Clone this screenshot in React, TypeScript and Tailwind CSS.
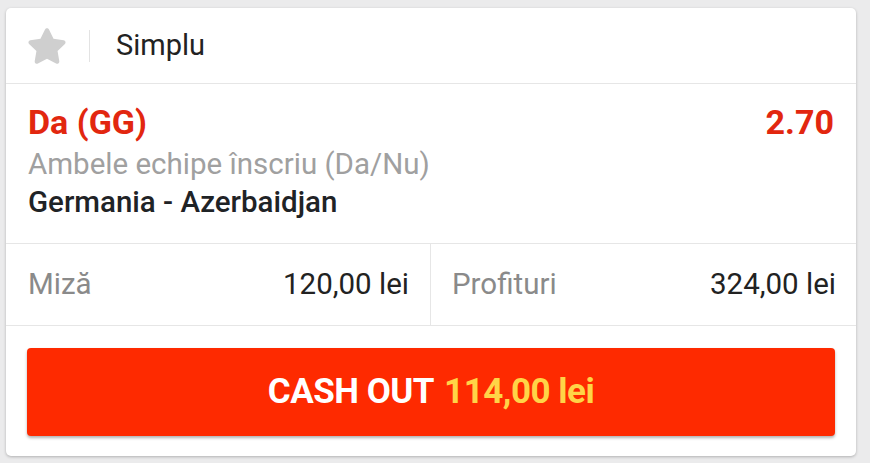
import { FaStar } from "react-icons/fa";

const App = () => {
  return (
    <div className="w-[870px] h-[463px] bg-[#ebebec] pt-[8px] pl-[6px] pr-[14px] font-['Roboto',sans-serif]">
      <div className="w-[850px] h-[448px] bg-white rounded-[5px] shadow-[0_1px_3px_rgba(0,0,0,0.25)] flex flex-col">
        <div className="h-[76px] flex items-center border-b border-[#e6e6e6] px-[21px]">
          <FaStar className="text-[#cfcfcf] text-[40px]" />
          <div className="w-px h-[32px] bg-[#e3e3e3] ml-[22px] mr-[26px]" />
          <span className="text-[29px] text-[#222]">Simplu</span>
        </div>

        <div className="h-[160px] border-b border-[#e6e6e6] px-[22px] pt-[18px]">
          <div className="flex justify-between items-baseline">
            <span className="text-[34px] font-bold text-[#e2270f] leading-[40px]">Da (GG)</span>
            <span className="text-[34px] font-bold text-[#e2270f] leading-[40px]">2.70</span>
          </div>
          <div className="text-[29.5px] text-[#a0a0a0] leading-[44px]">Ambele echipe înscriu (Da/Nu)</div>
          <div className="text-[29.5px] font-medium text-[#1f2326] leading-[32px]">Germania - Azerbaidjan</div>
        </div>

        <div className="h-[82px] border-b border-[#e6e6e6] grid grid-cols-2">
          <div className="flex items-center justify-between pl-[22px] pr-[21px] border-r border-[#e6e6e6]">
            <span className="text-[29.5px] text-[#8a8a8a]">Miză</span>
            <span className="text-[29.5px] text-[#222]">120,00 lei</span>
          </div>
          <div className="flex items-center justify-between pl-[21px] pr-[20px]">
            <span className="text-[29.5px] text-[#8a8a8a]">Profituri</span>
            <span className="text-[29.5px] text-[#222]">324,00 lei</span>
          </div>
        </div>

        <div className="px-[21px] pt-[22px]">
          <button className="w-full h-[88px] bg-[#fe2a00] rounded-[4px] shadow-[0_2px_3px_rgba(0,0,0,0.3)] flex items-center justify-center text-[35px] font-bold tracking-[-0.5px]">
            <span className="text-white">CASH OUT</span>
            <span className="text-[#ffd447] ml-[10px]">114,00 lei</span>
          </button>
        </div>
      </div>
    </div>
  );
};

export default App;
